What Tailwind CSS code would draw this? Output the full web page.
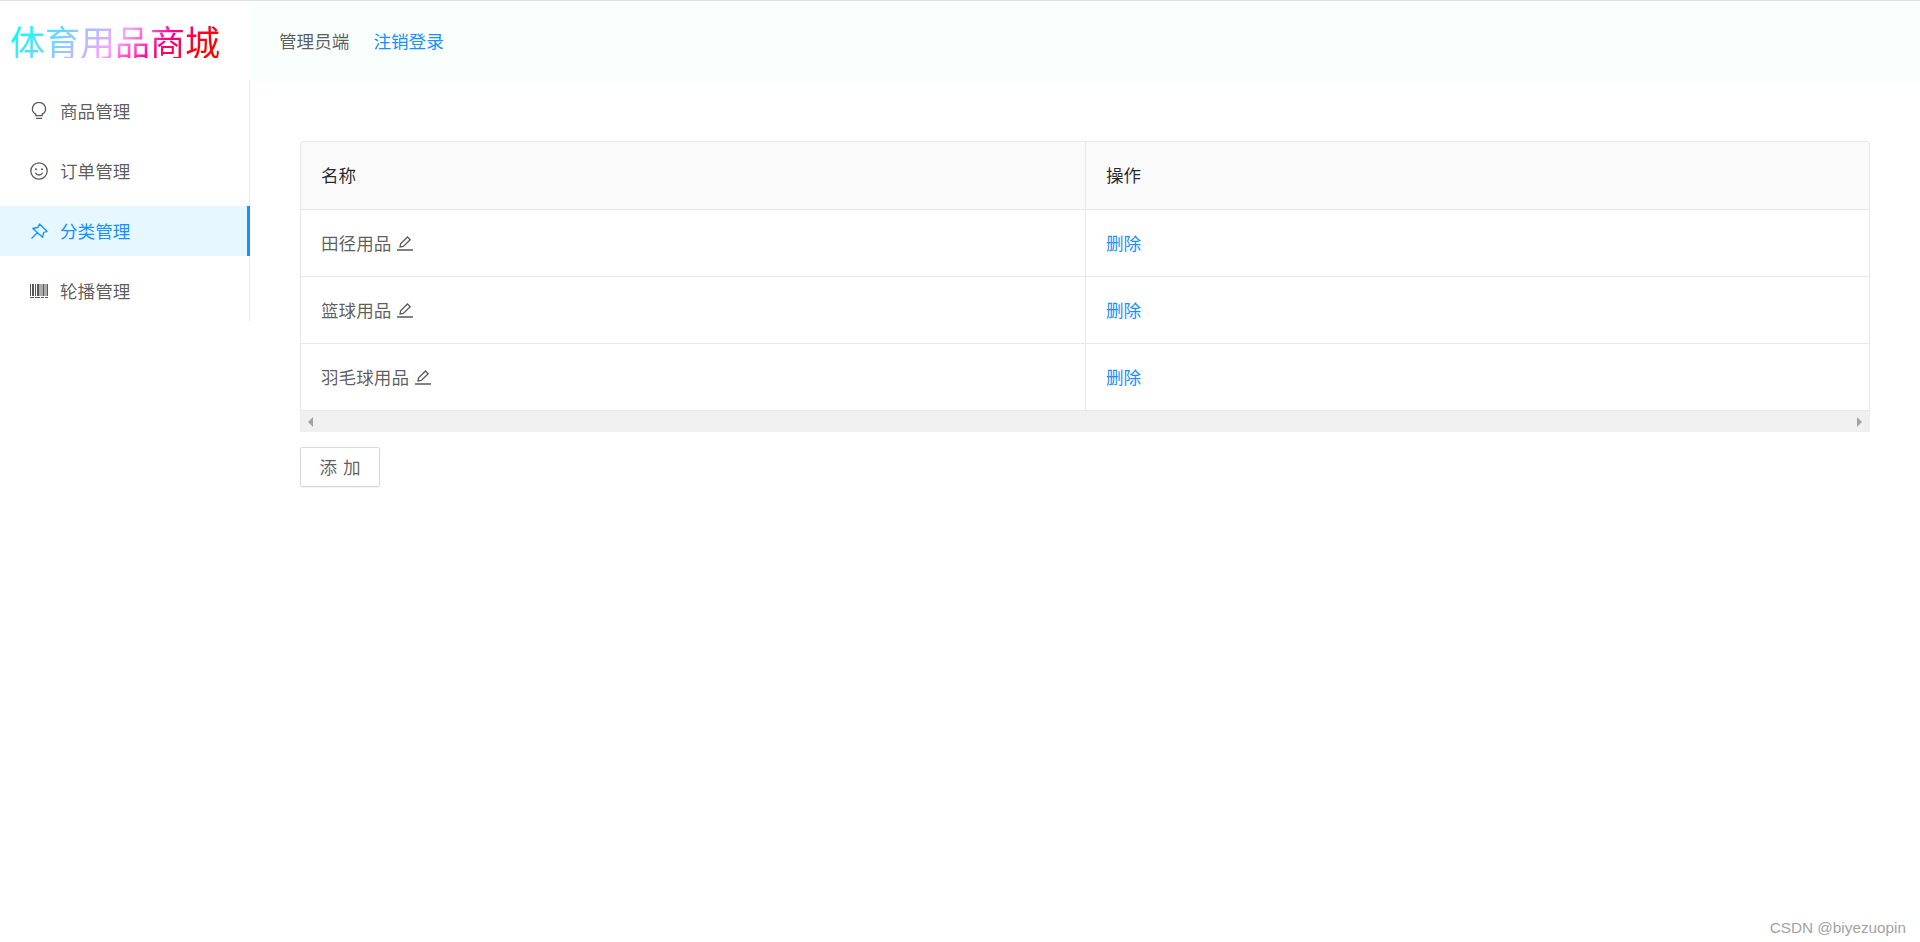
<!DOCTYPE html>
<html lang="zh-CN">
<head>
<meta charset="utf-8">
<title>体育用品商城</title>
<script src="https://cdn.jsdelivr.net/npm/@tailwindcss/browser@4"></script>
</head>
<body class="bg-white font-['Noto_Sans_CJK_SC','Liberation_Sans',sans-serif] text-[17.6px] text-black/65">
<div class="relative h-[942px] w-[1920px] overflow-hidden border-t border-[#dfe3e3]">
  <header class="flex h-[80px]">
    <div class="flex w-[250px] items-center pl-[10px] pb-[1px]">
      <span class="bg-[linear-gradient(135deg,#00ffff_5%,#ffa0ff_52%,#ff0090_70%,#ff0000_88%)] bg-clip-text text-[35px] leading-none text-transparent">体育用品商城</span>
    </div>
    <div class="flex flex-1 items-center gap-[24px] bg-[#f9fffd] pl-[29px]">
      <span>管理员端</span>
      <a class="text-[#1890ff]">注销登录</a>
    </div>
  </header>
  <div class="flex items-start">
    <nav class="flex h-[240px] w-[250px] flex-col gap-[10px] border-r border-[#e8e8e8] pt-[5px]">
      <a class="flex h-[50px] items-center gap-[12px] pl-[30px]">
        <svg class="h-[18px] w-[18px]" viewBox="0 0 18 18" fill="none" stroke="currentColor" stroke-width="1.300"><path d="M5.800 12.200C3.700 11.100 2.400 9.200 2.400 7a6.600 6.600 0 0 1 13.200 0c0 2.200-1.300 4.100-3.400 5.200v1.500H5.800zM6 16.300h6"/></svg>
        <span>商品管理</span>
      </a>
      <a class="flex h-[50px] items-center gap-[12px] pl-[30px]">
        <svg class="h-[18px] w-[18px]" viewBox="0 0 18 18" fill="none" stroke="currentColor" stroke-width="1.300"><circle cx="9" cy="9" r="8.200"/><circle cx="6" cy="7.300" r="1" fill="currentColor" stroke="none"/><circle cx="12" cy="7.300" r="1" fill="currentColor" stroke="none"/><path d="M5.400 10.800c.7 1.400 2.100 2.200 3.600 2.200s2.900-.8 3.600-2.200"/></svg>
        <span>订单管理</span>
      </a>
      <a class="relative flex h-[50px] items-center gap-[12px] bg-[#e6f7ff] pl-[30px] text-[#1890ff]">
        <svg class="h-[18px] w-[18px]" viewBox="0 0 18 18" fill="none" stroke="currentColor" stroke-width="1.300" stroke-linejoin="round"><path d="M9.500 2 17 9.300l-3.400 1.200-1 4.800L2.800 6.500l5.200-1zM7.300 10.800 1.500 16.500"/></svg>
        <span>分类管理</span>
        <span class="absolute right-[-1px] top-0 h-[50px] w-[3px] bg-[#1890ff]"></span>
      </a>
      <a class="flex h-[50px] items-center gap-[12px] pl-[30px]">
        <svg class="h-[18px] w-[18px]" viewBox="0 0 18 18" fill="currentColor"><path d="M0 2h1v12H0zM2 2h2v12H2zM5 2h1v12H5zM7 2h2.500v12H7zM10.500 2h1v12h-1zM12.500 2h2v12h-2zM15.500 2h.8v12h-.8zM16.800 2h1.200v12h-1.200zM0 15h4v1H0zM5 15h5v1H5zM11 15h3v1h-3zM15 15h3v1h-3z"/></svg>
        <span>轮播管理</span>
      </a>
    </nav>
    <main class="flex-1 pl-[50px] pr-[50px] pt-[60px]">
      <div class="overflow-hidden rounded-t-[4px] border border-b-0 border-[#e8e8e8]">
        <div class="grid grid-cols-[785px_1fr] text-black/85">
          <div class="flex h-[68px] items-center border-r border-b border-[#e8e8e8] bg-[#fafafa] pl-[20px]">名称</div>
          <div class="flex h-[68px] items-center border-b border-[#e8e8e8] bg-[#fafafa] pl-[20px]">操作</div>
        </div>
        <div class="grid grid-cols-[785px_1fr]">
          <div class="flex h-[67px] items-center gap-[6px] border-r border-b border-[#e8e8e8] pl-[20px]">田径用品
            <svg class="h-[16px] w-[16px]" viewBox="0 0 16 16" fill="none" stroke="currentColor" stroke-width="1.300"><path d="M0 15h16M3 12l.6-3.200L10.500 2l2.700 2.700-6.900 6.800z"/></svg>
          </div>
          <div class="flex h-[67px] items-center border-b border-[#e8e8e8] pl-[20px] text-[#1890ff]">删除</div>
          <div class="flex h-[67px] items-center gap-[6px] border-r border-b border-[#e8e8e8] pl-[20px]">篮球用品
            <svg class="h-[16px] w-[16px]" viewBox="0 0 16 16" fill="none" stroke="currentColor" stroke-width="1.300"><path d="M0 15h16M3 12l.6-3.200L10.500 2l2.700 2.700-6.900 6.800z"/></svg>
          </div>
          <div class="flex h-[67px] items-center border-b border-[#e8e8e8] pl-[20px] text-[#1890ff]">删除</div>
          <div class="flex h-[67px] items-center gap-[6px] border-r border-b border-[#e8e8e8] pl-[20px]">羽毛球用品
            <svg class="h-[16px] w-[16px]" viewBox="0 0 16 16" fill="none" stroke="currentColor" stroke-width="1.300"><path d="M0 15h16M3 12l.6-3.200L10.500 2l2.700 2.700-6.900 6.800z"/></svg>
          </div>
          <div class="flex h-[67px] items-center border-b border-[#e8e8e8] pl-[20px] text-[#1890ff]">删除</div>
        </div>
      </div>
      <div class="flex h-[21px] items-center justify-between bg-[#f0f0f0] px-[8px]">
        <span class="h-0 w-0 border-y-[5px] border-r-[5px] border-y-transparent border-r-[#a3a3a3]"></span>
        <span class="h-0 w-0 border-y-[5px] border-l-[5px] border-y-transparent border-l-[#a3a3a3]"></span>
      </div>
      <button class="mt-[15px] h-[40px] w-[80px] rounded-[2px] border border-[#d9d9d9] shadow-[0_1px_1px_rgba(0,0,0,0.05)] [word-spacing:2px]">添 加</button>
    </main>
  </div>
  <div class="absolute right-[14px] bottom-[7px] font-['Liberation_Sans',sans-serif] text-[15.3px] leading-none text-[#a3a3a3]">CSDN @biyezuopin</div>
</div>
</body>
</html>
